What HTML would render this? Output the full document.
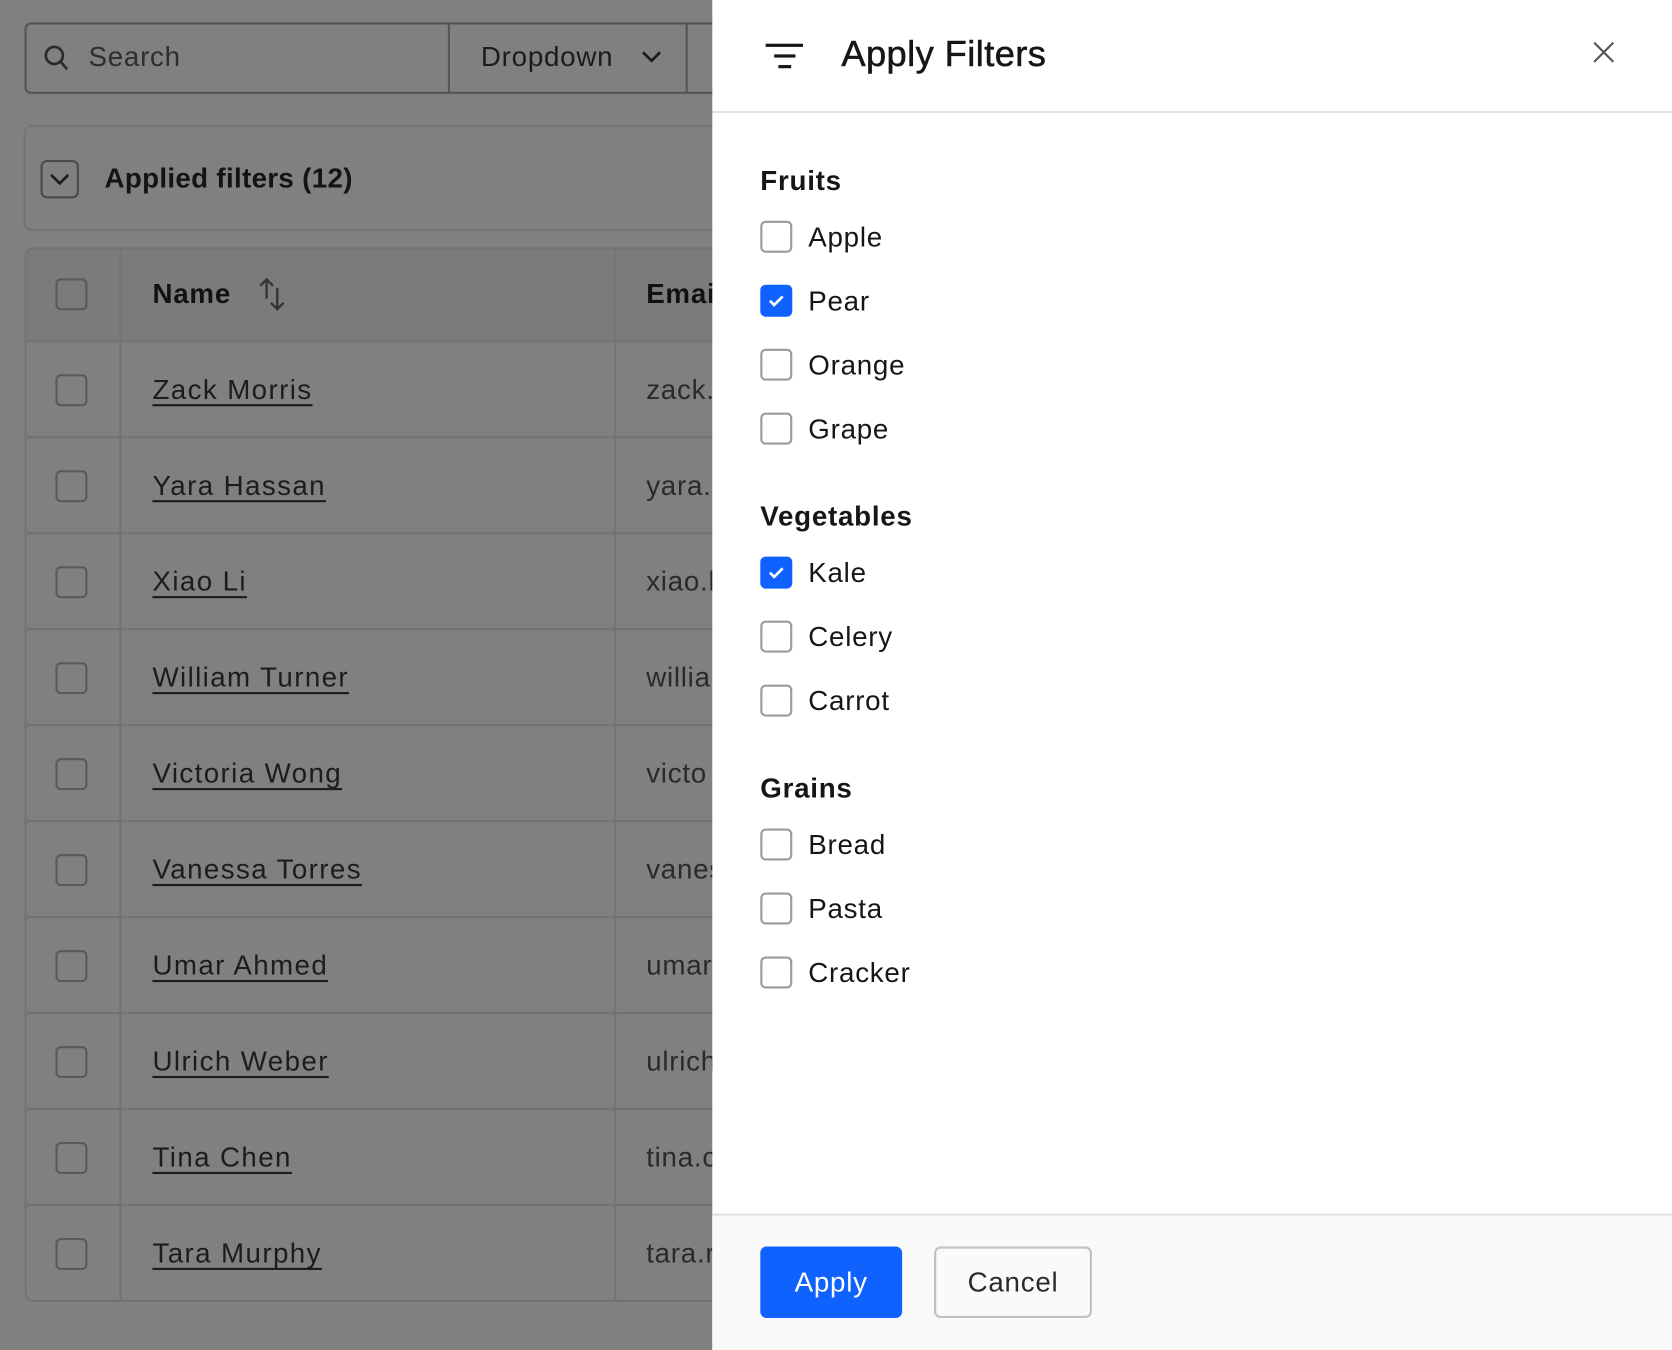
<!DOCTYPE html>
<html><head><meta charset="utf-8"><style>
*{box-sizing:border-box;margin:0;padding:0}
html,body{width:1672px;height:1350px;overflow:hidden;background:#808080}
#s{position:absolute;left:0;top:0;width:1568px;height:1266px;transform:scale(1.06633);transform-origin:0 0;font-family:"Liberation Sans",sans-serif;color:#161616;letter-spacing:0.7px}
.a{position:absolute}
.cb{position:absolute;width:30px;height:30px;border:2px solid #5a5a5c;border-radius:5px}
.nm{position:absolute;left:143px;font-size:26px;text-decoration:underline;text-underline-offset:5px;text-decoration-thickness:2px;color:#1c1c1e;letter-spacing:1.3px}
.em{position:absolute;left:606px;font-size:26px;color:#2a2a2a}
.hl{position:absolute;left:24px;width:644px;height:2px;background:#727272}
.pc{position:absolute;left:713px;width:30px;height:30px;border:2px solid #9a9aa0;border-radius:5px;background:#fff}
.pc.on{background:#0f62fe;border-color:#0f62fe}
.pl{position:absolute;left:758px;font-size:26px;color:#161616;line-height:30px}
.ph{position:absolute;left:713px;font-size:26px;font-weight:bold;color:#161616;line-height:30px}
</style></head><body><div id="s">
<div class="a" style="left:23px;top:21px;width:660px;height:67px;border:2px solid #555;border-radius:6px"></div>
<div class="a" style="left:420px;top:22px;width:2px;height:65px;background:#555"></div>
<div class="a" style="left:643px;top:22px;width:2px;height:65px;background:#555"></div>
<svg class="a" style="left:40px;top:41px" width="26" height="28" viewBox="0 0 26 28"><circle cx="11" cy="11" r="8" fill="none" stroke="#2a2a2a" stroke-width="2.5"/><path d="M17 17l6 7" stroke="#2a2a2a" stroke-width="2.5"/></svg>
<div class="a" style="left:83px;top:38px;font-size:26px;color:#2e2e2e">Search</div>
<div class="a" style="left:451px;top:38px;font-size:26px;color:#1c1c1c">Dropdown</div>
<svg class="a" style="left:601px;top:46px" width="20" height="14"><path d="M2 3l8 8 8-8" fill="none" stroke="#1c1c1c" stroke-width="2.5"/></svg>
<div class="a" style="left:22px;top:117px;width:660px;height:100px;border:2px solid #747474;border-radius:8px"></div>
<div class="a" style="left:38px;top:150px;width:36px;height:36px;border:2px solid #4a4a4a;border-radius:6px"></div>
<svg class="a" style="left:46px;top:161px" width="20" height="14"><path d="M2 3l8 8 8-8" fill="none" stroke="#1c1c1c" stroke-width="2.5"/></svg>
<div class="a" style="left:98px;top:152px;font-size:26px;font-weight:bold;color:#141414;letter-spacing:0.3px">Applied filters (12)</div>
<div class="a" style="left:23px;top:232px;width:660px;height:989px;border:2px solid #737373;border-radius:8px"></div>
<div class="a" style="left:25px;top:234px;width:643px;height:86px;background:#7b7b7b;border-radius:6px 0 0 0"></div>
<div class="a" style="left:112px;top:234px;width:2px;height:985px;background:#737373"></div>
<div class="a" style="left:576px;top:234px;width:2px;height:985px;background:#737373"></div>
<div class="cb" style="left:52px;top:261px"></div>
<div class="a" style="left:143px;top:260px;font-size:26px;font-weight:bold;color:#121212">Name</div>
<svg class="a" style="left:240px;top:258px" width="30" height="34"><path d="M10 22V4M4 10l6-6 6 6M20 12v20M14 26l6 6 6-6" fill="none" stroke="#333" stroke-width="2.2"/></svg>
<div class="a" style="left:606px;top:260px;font-size:26px;font-weight:bold;color:#121212">Emai</div>
<div class="hl" style="top:319px"></div><div class="hl" style="top:409px"></div><div class="hl" style="top:499px"></div><div class="hl" style="top:589px"></div><div class="hl" style="top:679px"></div><div class="hl" style="top:769px"></div><div class="hl" style="top:859px"></div><div class="hl" style="top:949px"></div><div class="hl" style="top:1039px"></div><div class="hl" style="top:1129px"></div>
<div class="cb" style="left:52px;top:351px"></div><div class="nm" style="top:350px">Zack Morris</div><div class="em" style="top:350px">zack.</div>
<div class="cb" style="left:52px;top:441px"></div><div class="nm" style="top:440px">Yara Hassan</div><div class="em" style="top:440px">yara.</div>
<div class="cb" style="left:52px;top:531px"></div><div class="nm" style="top:530px">Xiao Li</div><div class="em" style="top:530px">xiao.l</div>
<div class="cb" style="left:52px;top:621px"></div><div class="nm" style="top:620px">William Turner</div><div class="em" style="top:620px">willia</div>
<div class="cb" style="left:52px;top:711px"></div><div class="nm" style="top:710px">Victoria Wong</div><div class="em" style="top:710px">victo</div>
<div class="cb" style="left:52px;top:801px"></div><div class="nm" style="top:800px">Vanessa Torres</div><div class="em" style="top:800px">vanes</div>
<div class="cb" style="left:52px;top:891px"></div><div class="nm" style="top:890px">Umar Ahmed</div><div class="em" style="top:890px">umar</div>
<div class="cb" style="left:52px;top:981px"></div><div class="nm" style="top:980px">Ulrich Weber</div><div class="em" style="top:980px">ulrich</div>
<div class="cb" style="left:52px;top:1071px"></div><div class="nm" style="top:1070px">Tina Chen</div><div class="em" style="top:1070px">tina.c</div>
<div class="cb" style="left:52px;top:1161px"></div><div class="nm" style="top:1160px">Tara Murphy</div><div class="em" style="top:1160px">tara.r</div>
<div class="a" style="left:668px;top:0;width:900px;height:1266px;background:#fff"></div>
<div class="a" style="left:668px;top:104px;width:900px;height:2px;background:#e0e0e0"></div>
<div class="a" style="left:718px;top:41px;width:35px;height:3px;background:#161616"></div>
<div class="a" style="left:726px;top:51px;width:20px;height:3px;background:#161616"></div>
<div class="a" style="left:730px;top:61px;width:12px;height:3px;background:#161616"></div>
<div class="a" style="left:789px;top:32px;font-size:34px;font-weight:500;color:#161616;letter-spacing:0.4px;-webkit-text-stroke:0.5px #161616">Apply Filters</div>
<svg class="a" style="left:1492px;top:37px" width="24" height="24"><path d="M3 3l18 18M21 3L3 21" stroke="#555" stroke-width="2"/></svg>
<div class="ph" style="top:154px">Fruits</div>
<div class="pc" style="top:207px"></div><div class="pl" style="top:207px">Apple</div>
<div class="pc on" style="top:267px"></div><div class="pl" style="top:267px">Pear</div>
<div class="pc" style="top:327px"></div><div class="pl" style="top:327px">Orange</div>
<div class="pc" style="top:387px"></div><div class="pl" style="top:387px">Grape</div>
<div class="ph" style="top:469px">Vegetables</div>
<div class="pc on" style="top:522px"></div><div class="pl" style="top:522px">Kale</div>
<div class="pc" style="top:582px"></div><div class="pl" style="top:582px">Celery</div>
<div class="pc" style="top:642px"></div><div class="pl" style="top:642px">Carrot</div>
<div class="ph" style="top:724px">Grains</div>
<div class="pc" style="top:777px"></div><div class="pl" style="top:777px">Bread</div>
<div class="pc" style="top:837px"></div><div class="pl" style="top:837px">Pasta</div>
<div class="pc" style="top:897px"></div><div class="pl" style="top:897px">Cracker</div>
<svg class="a" style="left:719px;top:273px" width="18" height="18"><path d="M3 9l4 4 8-8" fill="none" stroke="#fff" stroke-width="2.5"/></svg>
<svg class="a" style="left:719px;top:528px" width="18" height="18"><path d="M3 9l4 4 8-8" fill="none" stroke="#fff" stroke-width="2.5"/></svg>
<div class="a" style="left:668px;top:1138px;width:900px;height:2px;background:#e0e0e6"></div>
<div class="a" style="left:668px;top:1140px;width:900px;height:126px;background:#f9f9f9"></div>
<div class="a" style="left:713px;top:1169px;width:133px;height:67px;background:#0f62fe;border-radius:6px;color:#fff;font-size:26px;line-height:67px;text-align:center">Apply</div>
<div class="a" style="left:876px;top:1169px;width:148px;height:67px;border:2px solid #c0c0c0;background:#fafafa;border-radius:6px;color:#2a2a2a;font-size:26px;line-height:63px;text-align:center">Cancel</div>
</div></body></html>
